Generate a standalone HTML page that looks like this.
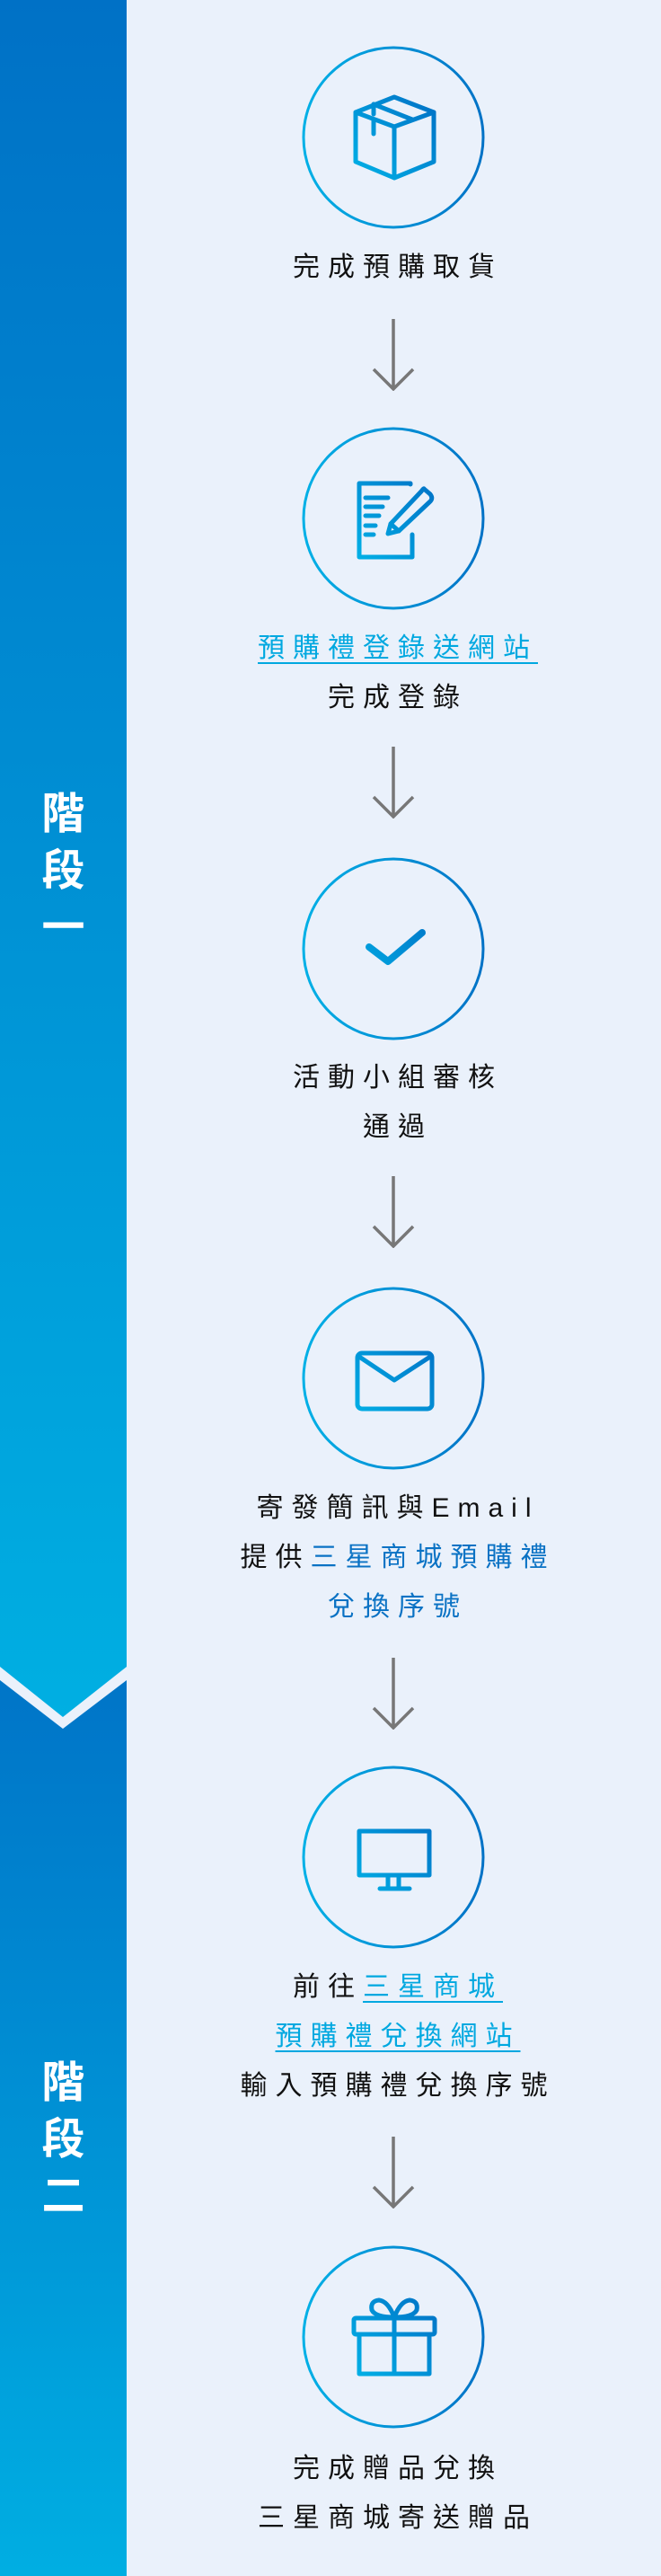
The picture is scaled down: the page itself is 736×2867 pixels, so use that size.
<!DOCTYPE html>
<html><head><meta charset="utf-8">
<style>
*{margin:0;padding:0;box-sizing:border-box}
body{width:736px;height:2867px;background:#eaf1fb;position:relative;overflow:hidden;font-family:"Liberation Sans","Noto Sans CJK TC",sans-serif}
.side{position:absolute;left:0;width:141px}
.stage{position:absolute;left:0;width:141px;text-align:center;color:#fff;font-family:"Noto Sans CJK TC",sans-serif;font-weight:700;font-size:48px;line-height:63px}
.ic{position:absolute;left:328px;width:220px;height:220px}
.arr{position:absolute;left:408px;width:60px;height:80px}
.t{position:absolute;left:141px;width:595px;text-align:center;font-family:"Liberation Sans","Noto Sans CJK TC",sans-serif;font-size:30px;line-height:55px;letter-spacing:9px;color:#111;padding-left:9px;white-space:nowrap}
.lk{color:#00a8e0;text-decoration:underline;text-decoration-thickness:2px;text-underline-offset:6px}
.bl{color:#0a72c4}
</style></head><body>
<svg class="side" style="top:0;height:2867px" width="141" height="2867">
<defs>
<linearGradient id="s1" x1="0" y1="0" x2="0" y2="1"><stop offset="0" stop-color="#0071c6"/><stop offset="1" stop-color="#00afe2"/></linearGradient>
<linearGradient id="s2" x1="0" y1="0" x2="0" y2="1"><stop offset="0" stop-color="#0073c7"/><stop offset="1" stop-color="#00aee2"/></linearGradient>
</defs>
<rect x="0" y="1840" width="141" height="1027" fill="url(#s2)"/>
<polygon points="0,1840 141,1840 141,1870 70,1924 0,1870" fill="#eaf1fb"/>
<polygon points="0,0 141,0 141,1855 70,1911 0,1855" fill="url(#s1)"/>
</svg>
<div class="stage" style="top:870px">階<br>段<br>一</div>
<div class="stage" style="top:2282px">階<br>段<br>二</div>

<svg width="0" height="0" style="position:absolute"><defs>
<linearGradient id="g" x1="0" y1="0" x2="1" y2="0"><stop offset="0" stop-color="#00b0e6"/><stop offset="1" stop-color="#0072c6"/></linearGradient>
<linearGradient id="gi" gradientUnits="userSpaceOnUse" x1="65" y1="150" x2="157" y2="70"><stop offset="0" stop-color="#00b0e6"/><stop offset="1" stop-color="#0072c6"/></linearGradient>
</defs></svg>

<!-- 1 box -->
<svg class="ic" style="top:43px" viewBox="0 0 220 220"><circle cx="110" cy="110" r="100" fill="none" stroke="url(#g)" stroke-width="3"/>
<g fill="none" stroke="url(#gi)" stroke-width="5" stroke-linejoin="round" stroke-linecap="round">
<path d="M68 82 L111 65 L155 82 L155 137 L111 155 L68 137 Z"/><path d="M68 82 L111 98 L155 82"/><path d="M111 98 V155"/><path d="M88 73 L131 90"/><path d="M88 73 V84 M88 90 V106"/></g></svg>
<svg class="arr" style="top:355px" viewBox="0 0 60 80"><path d="M30 0 V78 M8 56 L30 78 L52 56" fill="none" stroke="#777" stroke-width="3.5"/></svg>

<div class="t" style="top:270px">完成預購取貨</div>

<!-- 2 doc -->
<svg class="ic" style="top:467px" viewBox="0 0 220 220"><circle cx="110" cy="110" r="100" fill="none" stroke="url(#g)" stroke-width="3"/>
<g fill="none" stroke="url(#gi)" stroke-width="5" stroke-linejoin="round" stroke-linecap="round">
<path d="M129 72 V71 H72 V153 H131 V128"/><path d="M79 87 H104 M79 97 H98 M79 107 H94 M79 118 H90 M79 128 H88"/>
<path d="M144 77 L151 83 Q155 88 150 92 L116 124 L104 127 L107 116 L141 80 Q144 76 144 77 Z"/><path d="M107 116 L116 124"/></g></svg>
<div class="t" style="top:694px"><span class="lk">預購禮登錄送網站</span><br>完成登錄</div>
<svg class="arr" style="top:831px" viewBox="0 0 60 80"><path d="M30 0 V78 M8 56 L30 78 L52 56" fill="none" stroke="#777" stroke-width="3.5"/></svg>

<!-- 3 check -->
<svg class="ic" style="top:946px" viewBox="0 0 220 220"><circle cx="110" cy="110" r="100" fill="none" stroke="url(#g)" stroke-width="3"/>
<path d="M83 108 L104 124 L142 92" fill="none" stroke="url(#gi)" stroke-width="8" stroke-linecap="round" stroke-linejoin="round"/></svg>
<div class="t" style="top:1172px">活動小組審核<br>通過</div>
<svg class="arr" style="top:1309px" viewBox="0 0 60 80"><path d="M30 0 V78 M8 56 L30 78 L52 56" fill="none" stroke="#777" stroke-width="3.5"/></svg>

<!-- 4 mail -->
<svg class="ic" style="top:1424px" viewBox="0 0 220 220"><circle cx="110" cy="110" r="100" fill="none" stroke="url(#g)" stroke-width="3"/>
<g fill="none" stroke="url(#gi)" stroke-width="5" stroke-linejoin="round" stroke-linecap="round">
<rect x="70" y="82" width="83" height="62" rx="5"/><path d="M72 86 L111 112 L151 86"/></g></svg>
<div class="t" style="top:1651px">寄發簡訊與Email<br>提供<span class="bl">三星商城預購禮</span><br><span class="bl">兌換序號</span></div>
<svg class="arr" style="top:1845px" viewBox="0 0 60 80"><path d="M30 0 V78 M8 56 L30 78 L52 56" fill="none" stroke="#777" stroke-width="3.5"/></svg>

<!-- 5 monitor -->
<svg class="ic" style="top:1957px" viewBox="0 0 220 220"><circle cx="110" cy="110" r="100" fill="none" stroke="url(#g)" stroke-width="3"/>
<g fill="none" stroke="url(#gi)" stroke-width="5" stroke-linejoin="round" stroke-linecap="round">
<rect x="72" y="81" width="78" height="49"/><path d="M104 131 V143 M116 131 V143 M95 145 H128"/></g></svg>
<div class="t" style="top:2184px">前往<span class="lk">三星商城</span><br><span class="lk">預購禮兌換網站</span><br>輸入預購禮兌換序號</div>
<svg class="arr" style="top:2378px" viewBox="0 0 60 80"><path d="M30 0 V78 M8 56 L30 78 L52 56" fill="none" stroke="#777" stroke-width="3.5"/></svg>

<!-- 6 gift -->
<svg class="ic" style="top:2491px" viewBox="0 0 220 220"><circle cx="110" cy="110" r="100" fill="none" stroke="url(#g)" stroke-width="3"/>
<g fill="none" stroke="url(#gi)" stroke-width="5" stroke-linejoin="round" stroke-linecap="round">
<rect x="66" y="89" width="90" height="18" rx="2"/><rect x="72" y="107" width="78" height="44"/><path d="M111 89 V151"/>
<path d="M111 88 Q104 70 94 69 Q84 70 86 80 Q90 88 111 88 Z"/><path d="M111 88 Q118 70 128 69 Q138 70 136 80 Q132 88 111 88 Z"/></g></svg>
<div class="t" style="top:2720px">完成贈品兌換<br>三星商城寄送贈品</div>
</body></html>
